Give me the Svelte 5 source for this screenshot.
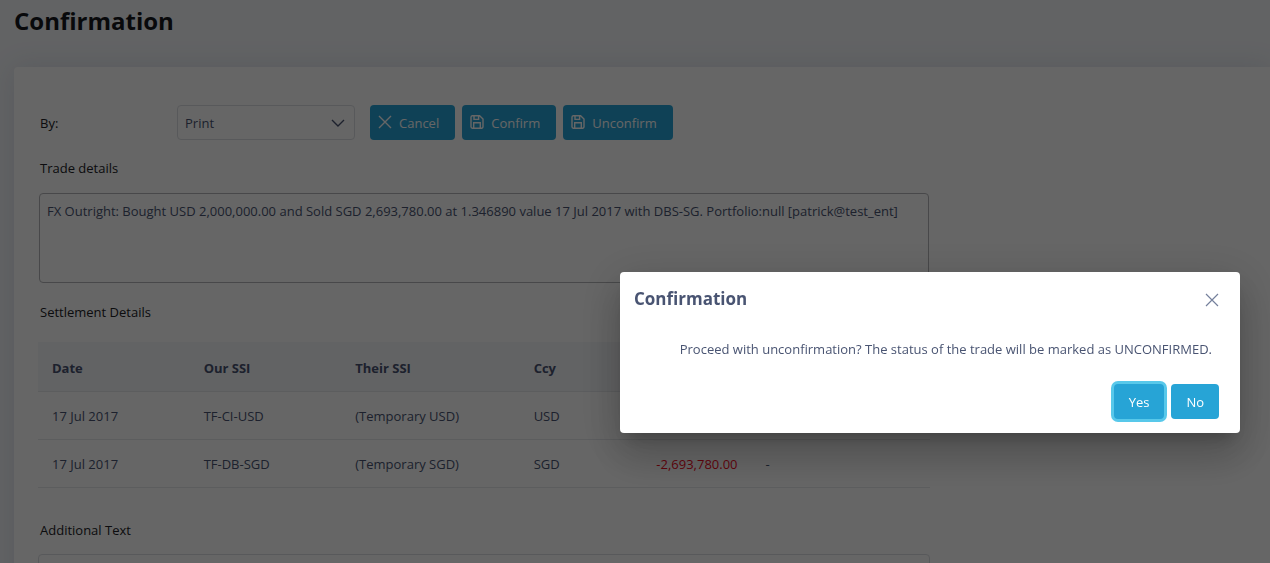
<script>
  let method = $state('Print');
  let open = $state(true);
  let details = $state(
    'FX Outright: Bought USD 2,000,000.00 and Sold SGD 2,693,780.00 at 1.346890 value 17 Jul 2017 with DBS-SG. Portfolio:null [patrick@test_ent]'
  );
  let extra = $state('');

  const actions = [
    { label: 'Cancel', icon: 'times' },
    { label: 'Confirm', icon: 'save' },
    { label: 'Unconfirm', icon: 'save' }
  ];

  const rows = [
    { date: '17 Jul 2017', ours: 'TF-CI-USD', theirs: '(Temporary USD)', ccy: 'USD', amount: '2,000,000.00', note: '-' },
    { date: '17 Jul 2017', ours: 'TF-DB-SGD', theirs: '(Temporary SGD)', ccy: 'SGD', amount: '-2,693,780.00', note: '-' }
  ];
</script>

{#snippet icon(name)}
  <svg class="icon" viewBox="0 0 14 14" aria-hidden="true">
    {#if name === 'times'}
      <path d="M1 1 L13 13 M13 1 L1 13" />
    {:else}
      <path d="M2.2 0.8 H9.6 L13 4 V11.8 A1.4 1.4 0 0 1 11.6 13.2 H2.4 A1.4 1.4 0 0 1 1 11.8 V2.2 A1.4 1.4 0 0 1 2.2 0.8 Z M3.7 13 V7.7 H10.3 V13 M4 1 V4.4 H8.6 V1" />
    {/if}
  </svg>
{/snippet}

<main class:locked={open}>
  <h1>Confirmation</h1>
  <section class="card">
    <div class="form">
      <div class="toolbar">
        <label for="method">By:</label>
        <div class="select">
          <select id="method" bind:value={method}>
            <option>Print</option>
            <option>Email</option>
          </select>
          <svg viewBox="0 0 14 14" aria-hidden="true"><path d="M1 4 L7 10 L13 4" /></svg>
        </div>
        <div class="actions">
          {#each actions as action}
            <button class="btn with-icon" type="button">{@render icon(action.icon)}{action.label}</button>
          {/each}
        </div>
      </div>

      <label class="heading" for="details">Trade details</label>
      <div class="inset">
        <textarea id="details" class="strong" bind:value={details}></textarea>
      </div>

      <h2 class="heading settlement">Settlement Details</h2>
      <table>
        <colgroup>
          <col class="c-ssi" /><col class="c-ssi" /><col class="c-wide" /><col class="c-ccy" /><col class="c-amt" /><col class="c-wide" />
        </colgroup>
        <thead>
          <tr><th>Date</th><th>Our SSI</th><th>Their SSI</th><th>Ccy</th><th class="num">Amount</th><th>Remarks</th></tr>
        </thead>
        <tbody>
          {#each rows as row}
            <tr>
              <td>{row.date}</td>
              <td>{row.ours}</td>
              <td>{row.theirs}</td>
              <td>{row.ccy}</td>
              <td class="num" class:negative={row.amount.startsWith('-')}>{row.amount}</td>
              <td>{row.note}</td>
            </tr>
          {/each}
        </tbody>
      </table>

      <label class="heading extra" for="extra">Additional Text</label>
      <textarea id="extra" bind:value={extra}></textarea>
    </div>
  </section>
</main>

{#if open}
  <div class="mask">
    <div class="dialog" role="dialog" aria-modal="true" aria-labelledby="dialog-title">
      <header>
        <h2 id="dialog-title">Confirmation</h2>
        <button class="close" type="button" aria-label="Close" onclick={() => (open = false)}>{@render icon('times')}</button>
      </header>
      <p>Proceed with unconfirmation? The status of the trade will be marked as UNCONFIRMED.</p>
      <footer>
        <button class="btn focused" type="button" onclick={() => (open = false)}>Yes</button>
        <button class="btn" type="button" onclick={() => (open = false)}>No</button>
      </footer>
    </div>
  </div>
{/if}

<style>
  :global(body) {
    background: #f5f7fa;
    font-family: 'Segoe UI', 'Open Sans', 'Noto Sans', sans-serif;
    font-size: 13px;
    line-height: 20px;
    color: #495472;
  }
  main {
    padding: 3px 0 0 14px;
  }
  main.locked {
    box-sizing: border-box;
    height: 100vh;
    overflow: hidden;
  }
  h1 {
    margin: 0 0 29px;
    font-size: 24px;
    line-height: 35px;
    font-weight: 700;
    color: #16181c;
  }
  .card {
    padding: 38px 26px 40px 24px;
    border-radius: 4px 0 0 4px;
    background: #fff;
    box-shadow: 0 0 28px rgba(82, 104, 140, 0.15);
  }
  .form {
    max-width: 892px;
    display: flex;
    flex-direction: column;
  }
  label,
  h2.heading {
    padding-left: 2px;
    color: #212226;
  }
  .toolbar {
    display: flex;
    align-items: center;
    margin-bottom: 18px;
  }
  .toolbar label {
    width: 137px;
  }
  .select {
    width: 178px;
    margin-right: 15px;
    display: grid;
    align-items: center;
  }
  .select > * {
    grid-area: 1 / 1;
  }
  .select svg {
    width: 14px;
    height: 14px;
    margin-right: 10px;
    justify-self: end;
    pointer-events: none;
  }
  svg {
    fill: none;
    stroke: currentColor;
    stroke-width: 1.4;
  }
  select,
  textarea {
    box-sizing: border-box;
    width: 100%;
    margin: 0;
    border: 1px solid #dcdfe4;
    border-radius: 4px;
    background: #fff;
    font: inherit;
    color: inherit;
  }
  select {
    appearance: none;
    height: 35px;
    padding: 0 32px 0 7px;
  }
  textarea {
    display: block;
    height: 90px;
    padding: 7px;
    resize: none;
  }
  textarea.strong {
    border-color: #b4b5b8;
  }
  .inset {
    padding: 0 1px;
  }
  .actions {
    display: flex;
    gap: 7px;
  }
  .btn {
    height: 35px;
    padding: 0 15px;
    border: 0;
    border-radius: 4px;
    background: #27a4d6;
    color: #fff;
    font: inherit;
  }
  .with-icon {
    display: flex;
    align-items: center;
    gap: 7px;
    padding: 0 16px 0 8px;
  }
  .icon {
    width: 14px;
    height: 14px;
  }
  .with-icon .icon {
    margin-bottom: 2px;
  }
  .heading {
    margin: 0 0 15px;
    font-size: 13px;
    line-height: 20px;
    font-weight: 400;
  }
  .settlement {
    margin: 19px 0 20px;
  }
  table {
    width: 100%;
    table-layout: fixed;
    border-collapse: collapse;
  }
  .c-ssi {
    width: 17%;
  }
  .c-wide {
    width: 20%;
  }
  .c-ccy {
    width: 12%;
  }
  .c-amt {
    width: 14%;
  }
  th,
  td {
    padding: 14px 14px 13px;
    border-bottom: 1px solid #e6e8ec;
    text-align: left;
  }
  th {
    padding-top: 16px;
    background: #f5f7fa;
    font-weight: 700;
  }
  .num {
    text-align: right;
  }
  .negative {
    color: #f00a1e;
  }
  .extra {
    margin-top: 32px;
    margin-bottom: 14px;
  }
  .mask {
    position: fixed;
    inset: 0;
    display: flex;
    align-items: center;
    justify-content: flex-end;
    padding: 142px 30px 0 0;
    background: rgba(0, 0, 0, 0.6);
  }
  .dialog {
    width: 50%;
    border-radius: 4px;
    background: #fff;
    box-shadow:
      0 11px 15px -7px rgba(0, 0, 0, 0.2),
      0 24px 38px 3px rgba(0, 0, 0, 0.14),
      0 9px 46px 8px rgba(0, 0, 0, 0.12);
  }
  .dialog header {
    display: flex;
    align-items: center;
    justify-content: space-between;
    padding: 14px 21px 0 14px;
  }
  .dialog h2 {
    margin: 0;
    font-size: 17px;
    line-height: 26px;
    font-weight: 700;
  }
  .close {
    display: flex;
    padding: 2px 0 0;
    border: 0;
    background: none;
    color: #75809c;
  }
  .close .icon {
    stroke-width: 1.2;
  }
  .dialog p {
    margin: 27px 28px 0 0;
    text-align: right;
  }
  .dialog footer {
    display: flex;
    justify-content: flex-end;
    gap: 7px;
    padding: 25px 21px 14px;
  }
  .focused {
    box-shadow: 0 0 0 3px #58c8ea;
  }
</style>
